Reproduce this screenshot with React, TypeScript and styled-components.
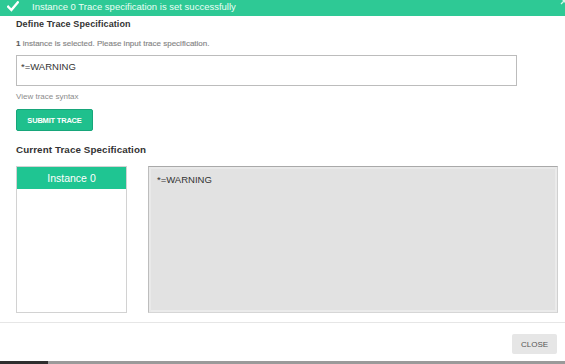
import styled, { createGlobalStyle } from "styled-components";

const GlobalStyle = createGlobalStyle`
  html, body {
    margin: 0;
    padding: 0;
    background: #ffffff;
    overflow: hidden;
  }

  body {
    font-family: "Liberation Sans", Arial, sans-serif;
  }
`;

const instances = ["Instance 0"];
const currentSpec = "*=WARNING";

const CheckIcon = () => (
  <svg width="12" height="11" viewBox="0 0 12 11">
    <path
      d="M1.2 5.8 L4.4 9 L10.8 1.4"
      fill="none"
      stroke="#ffffff"
      strokeWidth="2.4"
      strokeLinecap="square"
    />
  </svg>
);

const CloseMark = () => (
  <svg width="8" height="8" viewBox="0 0 8 8">
    <path d="M1 1 L7 7 M7 1 L1 7" stroke="#d8f6ea" strokeWidth="1.3" />
  </svg>
);

const App = () => {
  return (
    <Page>
      <GlobalStyle />
      <Banner>
        <CheckIcon />
        <BannerText>Instance 0 Trace specification is set successfully</BannerText>
        <BannerClose>
          <CloseMark />
        </BannerClose>
      </Banner>

      <Body>
        <SectionTitle>Define Trace Specification</SectionTitle>
        <Hint>
          <strong>1</strong> instance is selected. Please input trace
          specification.
        </Hint>
        <SpecInput>*=WARNING</SpecInput>
        <SyntaxLink>View trace syntax</SyntaxLink>
        <SubmitButton>SUBMIT TRACE</SubmitButton>

        <CurrentTitle $size={9.8}>Current Trace Specification</CurrentTitle>
        <Panels>
          <InstanceList>
            {instances.map((name, i) => (
              <InstanceItem key={name} $active={i === 0}>
                {name}
              </InstanceItem>
            ))}
          </InstanceList>
          <SpecView>{currentSpec}</SpecView>
        </Panels>
      </Body>

      <Footer>
        <CloseButton>CLOSE</CloseButton>
      </Footer>
      <BottomBar>
        <BottomThumb />
      </BottomBar>
    </Page>
  );
};

const Page = styled.div`
  width: 565px;
  height: 364px;
  display: flex;
  flex-direction: column;
  background: #ffffff;
  overflow: hidden;
`;

const Banner = styled.div`
  position: relative;
  height: 16px;
  display: flex;
  align-items: center;
  gap: 13px;
  padding-left: 7px;
  padding-bottom: 3px;
  box-sizing: border-box;
  background: #2ec995;
`;

const BannerText = styled.span`
  font-size: 9.5px;
  color: #eafff6;
  white-space: nowrap;
`;

const BannerClose = styled.span`
  position: absolute;
  right: -3px;
  top: -3px;
  display: flex;
`;

const Body = styled.div`
  display: flex;
  flex-direction: column;
  align-items: flex-start;
  padding: 0 8px 0 16px;
`;

const SectionTitle = styled.h3<{ $size?: number }>`
  margin: 2px 0 0;
  font-size: ${({ $size }) => $size ?? 9}px;
  line-height: 13px;
  font-weight: bold;
  letter-spacing: 0.1px;
  color: #333333;
`;

const Hint = styled.p`
  margin: 7px 0 0;
  font-size: 8px;
  line-height: 11px;
  color: #858585;
  -webkit-text-stroke: 0.15px #858585;

  strong {
    color: #555555;
  }
`;

const SpecInput = styled.div`
  box-sizing: border-box;
  width: 501px;
  height: 31px;
  margin-top: 6px;
  padding: 5px 4px;
  border: 1px solid #bcbcbc;
  font-size: 9.5px;
  line-height: 12px;
  color: #333333;
`;

const SyntaxLink = styled.span`
  margin-top: 5px;
  font-size: 8px;
  line-height: 11px;
  color: #8c8c8c;
`;

const SubmitButton = styled.button`
  box-sizing: border-box;
  width: 77px;
  height: 22px;
  margin-top: 7px;
  padding: 0;
  border: 1px solid #17a67a;
  border-radius: 2px;
  background: #1fc08d;
  font-family: "Liberation Sans", Arial, sans-serif;
  font-size: 7.5px;
  font-weight: bold;
  letter-spacing: -0.2px;
  color: #ffffff;
`;

const CurrentTitle = styled(SectionTitle)`
  margin-top: 12px;
`;

const Panels = styled.div`
  display: flex;
  gap: 21px;
  margin-top: 10px;
  height: 147px;
`;

const InstanceList = styled.div`
  box-sizing: border-box;
  width: 111px;
  border: 1px solid #d2d2d2;
  background: #ffffff;
`;

const InstanceItem = styled.div<{ $active: boolean }>`
  height: 22px;
  display: flex;
  align-items: center;
  justify-content: center;
  font-size: 10.5px;
  color: ${({ $active }) => ($active ? "#ffffff" : "#333333")};
  background: ${({ $active }) => ($active ? "#1fc592" : "transparent")};
`;

const SpecView = styled.div`
  box-sizing: border-box;
  width: 410px;
  padding: 7px 8px;
  border: 1px solid;
  border-color: #a9a9a9 #d0d0d0 #d6d6d6 #bdbdbd;
  box-shadow: inset 2px 2px 0 #e9e9e9, inset -2px -2px 0 #ebebeb;
  background: #e2e2e2;
  font-size: 9.5px;
  line-height: 12px;
  color: #333333;
`;

const Footer = styled.div`
  display: flex;
  justify-content: flex-end;
  margin-top: 9px;
  padding: 11px 8px 0 0;
  border-top: 1px solid #e6e6e6;
  flex: 1;
`;

const CloseButton = styled.button`
  box-sizing: border-box;
  width: 45px;
  height: 20px;
  padding: 0;
  border: none;
  border-radius: 2px;
  background: #e6e6e6;
  font-family: "Liberation Sans", Arial, sans-serif;
  font-size: 8px;
  color: #555555;
`;

const BottomBar = styled.div`
  height: 3px;
  background: #9a9a9a;
  display: flex;
`;

const BottomThumb = styled.div`
  width: 48px;
  background: #2e2e2e;
`;

export default App;
